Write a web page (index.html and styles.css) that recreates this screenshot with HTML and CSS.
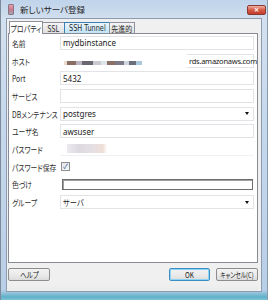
FILE: index.html
```html
<!DOCTYPE html>
<html lang="ja">

<head>
    <meta charset="UTF-8">
    <title>新しいサーバ登録</title>
    <link rel="stylesheet" href="styles.css">
</head>

<body>
    <div class="window">
        <div class="titlebar">
            <span class="appIcon"></span>
            <span class="title">新しいサーバ登録</span>
            <span class="closeBtn">✕</span>
        </div>

        <div class="client">
            <div class="tabs">
                <span class="tab active t1"><span>プロパティ</span></span>
                <span class="tab t2"><span>SSL</span></span>
                <span class="tab hover t3"><span>SSH Tunnel</span></span>
                <span class="tab t4"><span>先進的</span></span>
            </div>

            <div class="panel">
                <div class="row">
                    <label>名前</label>
                    <div class="field">mydbinstance</div>
                </div>
                <div class="row">
                    <label>ホスト</label>
                    <div class="field host">
                        <span class="blur">
                            <i style="background:#e8dccd;width:3px"></i><i style="background:#8a6d62;width:9px"></i><i style="background:#b9b4c0;width:6px"></i><i style="background:#6a6770;width:11px"></i><i style="background:#c9c9cf;width:8px"></i><i style="background:#dde4ea;width:6px"></i><i style="background:#8b7068;width:8px"></i><i style="background:#7b7a86;width:9px"></i><i style="background:#cfd6de;width:5px"></i><i style="background:#6b6f7c;width:7px"></i><i style="background:#aac8dc;width:6px"></i>
                        </span>
                        <span class="hostText">rds.amazonaws.com</span>
                    </div>
                </div>
                <div class="row">
                    <label>Port</label>
                    <div class="field">5432</div>
                </div>
                <div class="row">
                    <label>サービス</label>
                    <div class="field"></div>
                </div>
                <div class="row">
                    <label>DBメンテナンス</label>
                    <div class="field select">postgres<span class="arrow"></span></div>
                </div>
                <div class="row">
                    <label>ユーザ名</label>
                    <div class="field">awsuser</div>
                </div>
                <div class="row">
                    <label>パスワード</label>
                    <div class="field pass"><span class="passBlur"></span></div>
                </div>
                <div class="row">
                    <label>パスワード保存</label>
                    <span class="check">✓</span>
                </div>
                <div class="row">
                    <label>色づけ</label>
                    <div class="colorBox"></div>
                </div>
                <div class="row">
                    <label>グループ</label>
                    <div class="field select"><span class="jp">サーバ</span><span class="arrow"></span></div>
                </div>
            </div>

            <div class="buttons">
                <button class="btn help"><span>ヘルプ</span></button>
                <span class="spacer"></span>
                <button class="btn ok"><span>OK</span></button>
                <button class="btn cancel"><span>キャンセル(C)</span></button>
            </div>
            <div class="grip"></div>
        </div>
    </div>
</body>

</html>
```

FILE: styles.css
```css
body {
    margin: 0;
    width: 268px;
    height: 300px;
    overflow: hidden;
    font-family: "Noto Sans CJK JP", "Noto Sans", sans-serif;
    font-size: 9px;
    font-feature-settings: "palt";
    color: #2a2a2a;
}

.window {
    width: 268px;
    height: 300px;
    box-sizing: border-box;
    padding: 0 5px 8px 5px;
    display: flex;
    flex-direction: column;
    background: linear-gradient(180deg, #bfd3ea 0px, #d3e0ef 20px, #c6d8ec 120px, #b9cfe7 290px, #5fb0c9 297px, #7fc4d8 300px);
    border-left: 1px solid #7d8a99;
    border-right: 1px solid #8a9aab;
}

.titlebar {
    height: 18px;
    display: flex;
    align-items: center;
    margin-left: -4px;
}

.appIcon {
    width: 4px;
    height: 9px;
    margin-left: 6px;
    border-radius: 1px;
    background: linear-gradient(180deg, #e8a0b0, #c87b8c 50%, #9fa6b5);
    border: 1px solid #8a7580;
}

.title {
    margin-left: 6px;
    font-size: 8.5px;
    color: #1e1e1e;
}

.closeBtn {
    margin-left: auto;
    margin-right: -4px;
    margin-top: 2px;
    width: 17px;
    height: 8px;
    line-height: 8px;
    text-align: center;
    font-size: 6px;
    font-weight: bold;
    color: #fff;
    border: 1px solid #8a3a30;
    border-radius: 2px;
    background: linear-gradient(180deg, #eeb0a2, #d65a44 50%, #c23d2c);
}

.client {
    flex: 1;
    display: flex;
    flex-direction: column;
    background: #f0f0f0;
    border: 1px solid #8c9cb0;
    padding: 2px 3px 0 1px;
}

.tabs {
    display: flex;
    height: 12px;
    padding-left: 1px;
    position: relative;
    z-index: 1;
}

.tab {
    height: 11px;
    margin-top: 1px;
    border: 1px solid #8e939b;
    border-bottom: none;
    margin-right: -1px;
    background: linear-gradient(180deg, #f4f4f4, #e0e0e0);
    display: flex;
    justify-content: center;
    align-items: center;
    box-sizing: border-box;
}

.tab span {
    display: inline-block;
    white-space: nowrap;
    font-size: 8.5px;
    transform: scaleX(0.82);
}

.t1 { width: 34px; }
.t2 { width: 23px; }
.t3 { width: 46px; }
.t4 { width: 26px; }

.tab.active {
    background: #fff;
    margin-top: 0;
    height: 13px;
    z-index: 2;
}

.tab.hover {
    background: linear-gradient(180deg, #eaf6fd, #bfe4f9);
    border-color: #3c7fb1;
}

.tab.hover span {
    font-family: "DejaVu Sans", sans-serif;
    font-size: 8px;
    transform: scaleX(0.82);
}

.panel {
    height: 228px;
    background: #fff;
    border: 1px solid #898c95;
    padding: 0 3px 0 3px;
    display: flex;
    flex-direction: column;
}

.row {
    display: flex;
    align-items: center;
    height: 17.7px;
}

.row label {
    width: 48px;
    flex: none;
    font-size: 8.5px;
    color: #2e2e2e;
    white-space: nowrap;
    transform: scaleX(0.8);
    transform-origin: left center;
}

.field {
    flex: 1;
    height: 12px;
    border: 1px solid #e2e3e6;
    padding-left: 2px;
    font-family: "Noto Sans", sans-serif;
    font-size: 8px;
    display: flex;
    align-items: center;
    color: #222;
}

.field .jp {
    font-family: "Noto Sans CJK JP", sans-serif;
    font-size: 8.5px;
    display: inline-block;
    transform: scaleX(0.85);
    transform-origin: left center;
}

.field.host {
    border-color: transparent;
    padding-left: 0;
}

.blur {
    display: flex;
    height: 4px;
    margin-top: 4px;
    margin-left: 3px;
}

.blur i {
    display: block;
    height: 4px;
}

.hostText {
    margin-left: auto;
    height: 12px;
    line-height: 12px;
    width: 62px;
    padding: 0 2px 0 2px;
    border: 1px solid #e2e3e6;
    border-left: none;
    margin-right: -1px;
    font-size: 7.5px;
    letter-spacing: -0.25px;
    white-space: nowrap;
}

.field.pass {
    border-color: transparent;
    border-bottom: 1px solid #eef0f3;
}

.passBlur {
    display: block;
    width: 40px;
    height: 9px;
    margin-left: 4px;
    background: linear-gradient(90deg, #eceaf0, #dcd9df 30%, #e4dfe4 60%, #f0dfd8 90%, #fff);
}

.select .arrow {
    margin-left: auto;
    margin-right: 4px;
    width: 0;
    height: 0;
    border-left: 2.5px solid transparent;
    border-right: 2.5px solid transparent;
    border-top: 3px solid #111;
}

.check {
    width: 7px;
    height: 7px;
    line-height: 7px;
    margin-left: 1px;
    border: 1px solid #8f8f8f;
    background: linear-gradient(180deg, #e4e8ee, #f6f7f9);
    font-size: 7px;
    text-align: center;
    color: #3a4f8a;
}

.colorBox {
    flex: 1;
    height: 9px;
    margin-left: 2px;
    margin-right: 1px;
    border: 1px solid #6e6e6e;
    box-shadow: inset 1px 1px 0 #a0a0a0;
    background: #fff;
}

.buttons {
    display: flex;
    align-items: center;
    height: 20px;
    padding-top: 1px;
}

.spacer {
    flex: 1;
}

.btn {
    height: 13px;
    width: 42px;
    padding: 0;
    margin-left: 6px;
    font-family: "Noto Sans CJK JP", "Noto Sans", sans-serif;
    font-feature-settings: "palt";
    font-size: 8px;
    color: #222;
    border: 1px solid #8d8d8d;
    border-radius: 2px;
    background: linear-gradient(180deg, #f3f3f3, #ebebeb 50%, #dcdcdc);
    display: flex;
    justify-content: center;
    align-items: center;
    overflow: visible;
}

.btn span {
    display: inline-block;
    white-space: nowrap;
    transform: scaleX(0.8);
}

.btn.cancel span {
    font-size: 7.5px;
    transform: scaleX(0.76);
}

.btn.help {
    margin-left: 0;
}

.btn.ok {
    width: 41px;
    border-color: #3c8fc4;
    box-shadow: inset 0 0 0 1px #8fd3f3;
}

.grip {
    flex: 1;
    background: linear-gradient(180deg, #f0f0f0, #ebebeb);
}
```
